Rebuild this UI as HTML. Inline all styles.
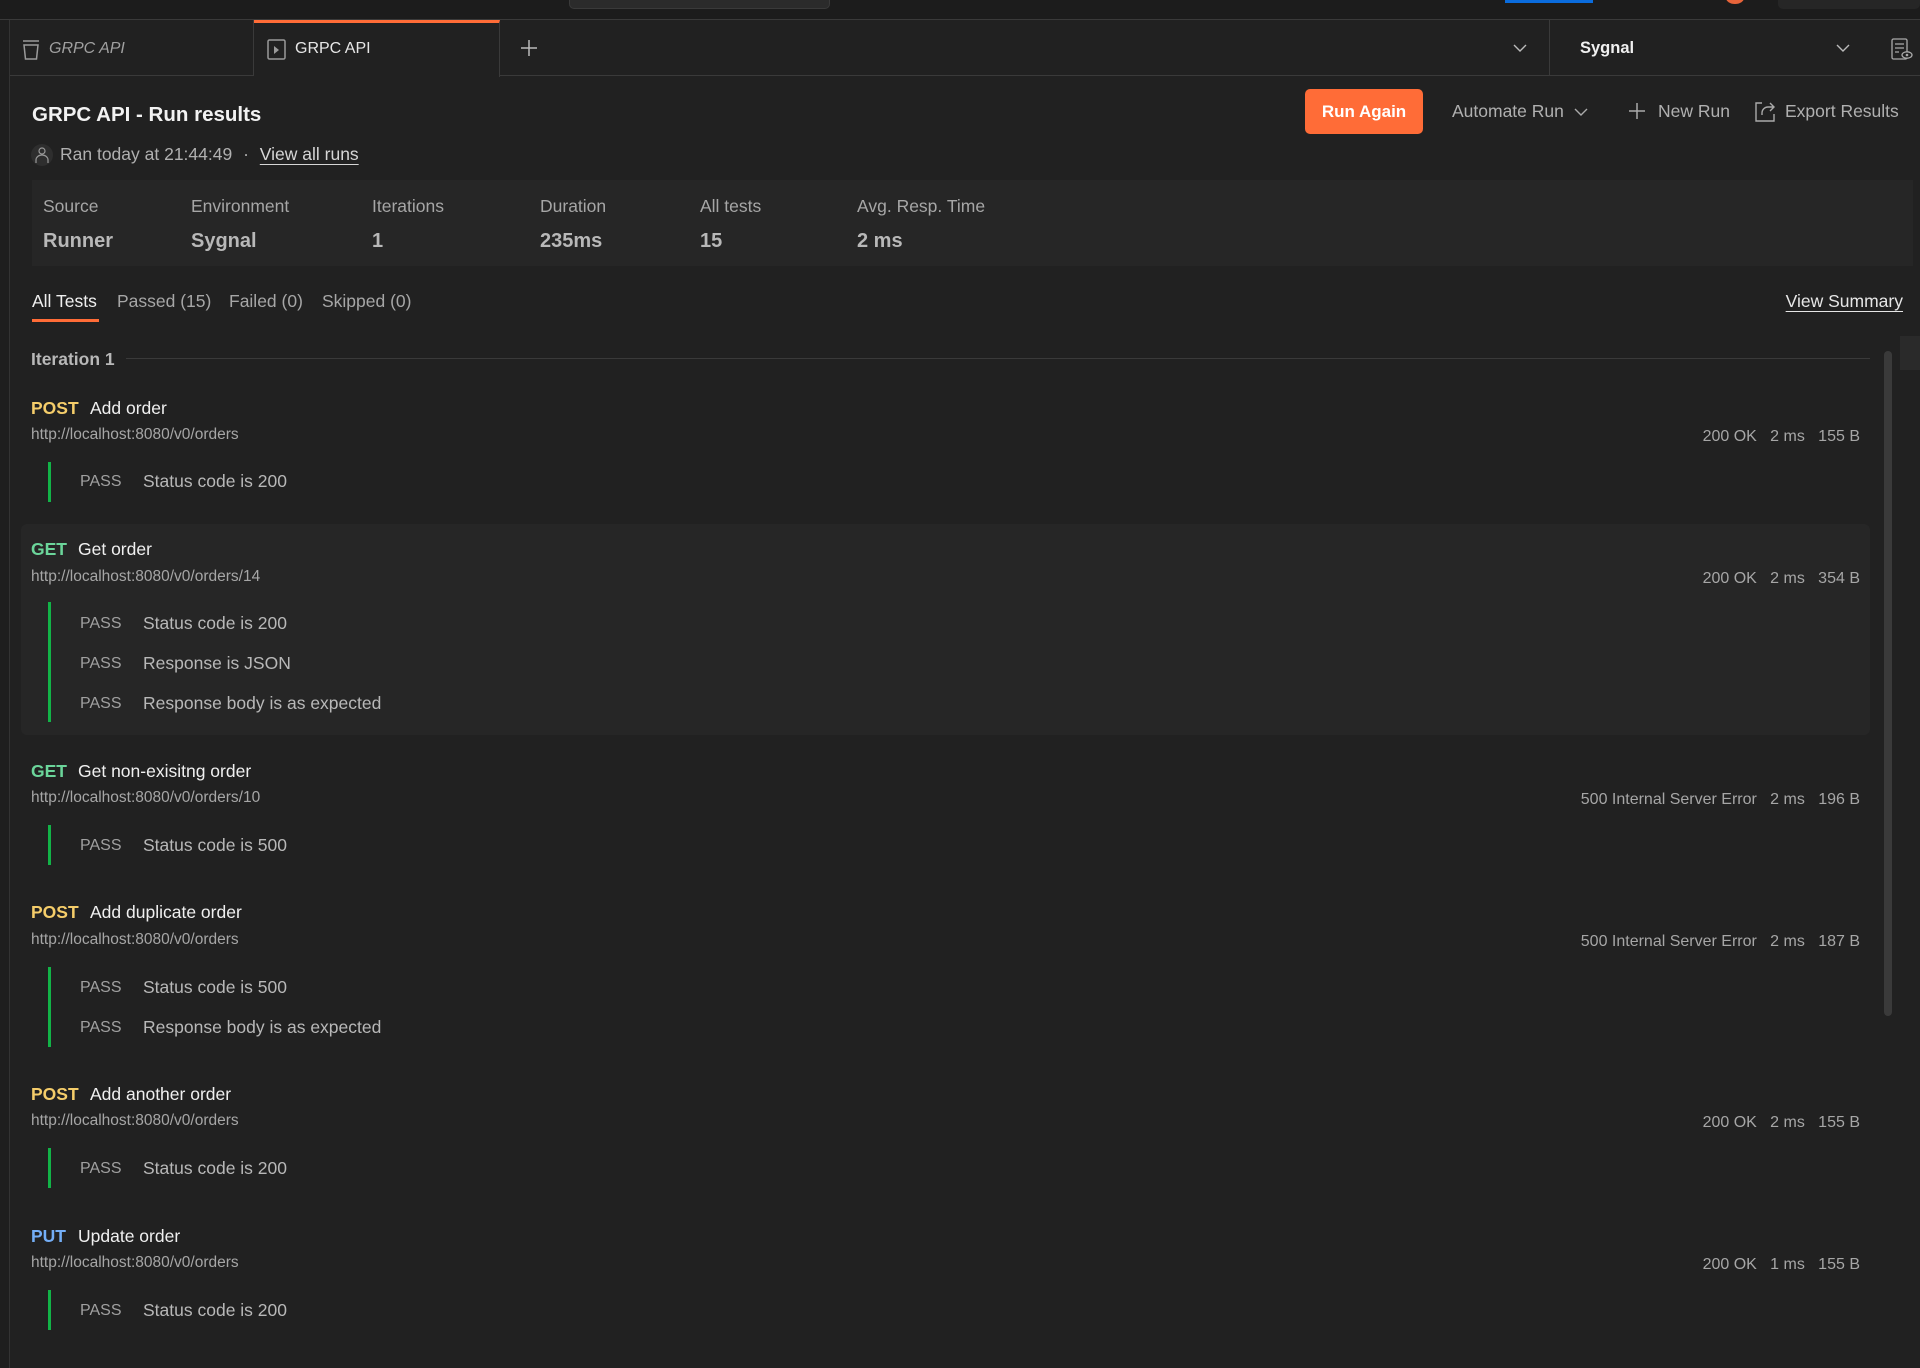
<!DOCTYPE html>
<html><head><meta charset="utf-8"><style>
*{margin:0;padding:0;box-sizing:border-box}
body{width:1920px;height:1368px;background:#212121;font-family:"Liberation Sans",sans-serif;color:#e6e6e6;position:relative;overflow:hidden}
.a{position:absolute;white-space:nowrap}
.sec{color:#a6a6a6}
.m{font-weight:bold;font-size:17.5px}
.nm{font-size:17.5px;color:#f0f0f0}
.url{font-size:15.5px;color:#a6a6a6}
.pass{font-size:16px;color:#a0a0a0}
.tn{font-size:17.5px;color:#b8b8b8}
.bar{position:absolute;left:48px;width:3px;background:#12b347}
.st{font-size:16px;color:#a6a6a6;text-align:right;right:60px}
</style></head><body>
<div class="a" style="left:0;top:0;width:1920px;height:20px;background:#1c1c1c;border-bottom:1px solid #3a3a3a"></div>
<div class="a" style="left:569px;top:0;width:261px;height:9px;background:#2b2b2b;border:1px solid #3a3a3a;border-top:none;border-radius:0 0 5px 5px"></div>
<div class="a" style="left:1505px;top:0;width:88px;height:3px;background:#0a6cde"></div>
<div class="a" style="left:1726px;top:-8px;width:18px;height:12px;background:#e8643a;border-radius:50%"></div>
<div class="a" style="left:1778px;top:0;width:142px;height:9px;background:#262626;border-radius:0 0 5px 5px"></div>
<div class="a" style="left:0;top:20px;width:1920px;height:56px;background:#212121;border-bottom:1px solid #3a3a3a"></div>
<div class="a" style="left:0;top:20px;width:10px;height:1348px;border-right:1px solid #333;background:#1e1e1e"></div>
<div class="a" style="left:10px;top:20px;width:244px;height:56px;border-right:1px solid #3a3a3a"></div>
<div class="a" style="left:254px;top:20px;width:246px;height:57px;border-right:1px solid #3a3a3a;border-top:3px solid #ff6c37;background:#212121"></div>
<svg class="a" style="left:21px;top:39px" width="20" height="22" viewBox="0 0 20 22"><path d="M2 2h16M3 6h14l-1.5 14h-11z" stroke="#9a9a9a" stroke-width="1.5" fill="none"/></svg>
<div class="a" style="left:49px;top:40px;font-size:16px;font-style:italic;color:#a0a0a0">GRPC API</div>
<svg class="a" style="left:267px;top:39px" width="20" height="22" viewBox="0 0 20 22"><rect x="1" y="1" width="17" height="19" rx="1.5" stroke="#9a9a9a" stroke-width="1.5" fill="none"/><path d="M7 7l5 4-5 4z" fill="#9a9a9a"/></svg>
<div class="a" style="left:295px;top:40px;font-size:16px;color:#e6e6e6">GRPC API</div>
<svg class="a" style="left:520px;top:39px" width="18" height="18"><path d="M9 1v16M1 9h16" stroke="#bbb" stroke-width="1.5"/></svg>
<svg class="a" style="left:1513px;top:43px" width="14" height="10"><path d="M1 2l6 6 6-6" stroke="#bbb" stroke-width="1.4" fill="none"/></svg>
<div class="a" style="left:1549px;top:20px;width:1px;height:56px;background:#3a3a3a"></div>
<div class="a" style="left:1580px;top:39px;font-size:16.5px;font-weight:bold;color:#f0f0f0">Sygnal</div>
<svg class="a" style="left:1836px;top:43px" width="14" height="10"><path d="M1 2l6 6 6-6" stroke="#bbb" stroke-width="1.4" fill="none"/></svg>
<svg class="a" style="left:1891px;top:38px" width="22" height="24"><rect x="1" y="1" width="15" height="20" rx="1.5" stroke="#aaa" stroke-width="1.3" fill="none"/><path d="M4 6h9M4 10h9M4 14h4" stroke="#aaa" stroke-width="1.3"/><ellipse cx="16" cy="17" rx="5" ry="3.2" stroke="#aaa" stroke-width="1.3" fill="#212121"/><circle cx="16" cy="17" r="1.3" fill="#aaa"/></svg>
<div class="a" style="left:32px;top:103px;font-size:20.5px;font-weight:bold;color:#f2f2f2">GRPC API - Run results</div>
<div class="a" style="left:31px;top:144px;width:22px;height:22px;border-radius:50%;background:#2e2e2e"></div>
<svg class="a" style="left:34px;top:146px" width="16" height="18"><circle cx="8" cy="5" r="3" stroke="#999" stroke-width="1.2" fill="none"/><path d="M2 17v-3a6 5 0 0 1 12 0v3" stroke="#999" stroke-width="1.2" fill="none"/></svg>
<div class="a sec" style="left:60px;top:144px;font-size:17.5px;color:#b0b0b0">Ran today at 21:44:49 <span style="margin:0 6px">·</span> <span style="color:#d6d6d6;text-decoration:underline;text-underline-offset:4px">View all runs</span></div>
<div class="a" style="left:1305px;top:89px;width:118px;height:45px;background:#ff6c37;border-radius:5px;color:#fff;font-weight:bold;font-size:17px;text-align:center;line-height:45px">Run Again</div>
<div class="a" style="left:1452px;top:101px;font-size:17.5px;color:#b0b0b0">Automate Run</div>
<svg class="a" style="left:1574px;top:107px" width="14" height="10"><path d="M1 2l6 6 6-6" stroke="#aaa" stroke-width="1.4" fill="none"/></svg>
<svg class="a" style="left:1628px;top:102px" width="18" height="18"><path d="M9 1v16M1 9h16" stroke="#aaa" stroke-width="1.5"/></svg>
<div class="a" style="left:1658px;top:101px;font-size:17.5px;color:#b0b0b0">New Run</div>
<svg class="a" style="left:1754px;top:100px" width="22" height="22"><path d="M8 3H2v18h18v-7" stroke="#aaa" stroke-width="1.4" fill="none"/><path d="M8 15v-2a6 6 0 0 1 6-6h6M16 3l4 4-4 4" stroke="#aaa" stroke-width="1.4" fill="none"/></svg>
<div class="a" style="left:1785px;top:101px;font-size:17.5px;color:#b0b0b0">Export Results</div>
<div class="a" style="left:32px;top:180px;width:1881px;height:86px;background:#262626"></div>
<div class="a sec" style="left:43px;top:196px;font-size:17.5px">Source</div>
<div class="a sec" style="left:191px;top:196px;font-size:17.5px">Environment</div>
<div class="a sec" style="left:372px;top:196px;font-size:17.5px">Iterations</div>
<div class="a sec" style="left:540px;top:196px;font-size:17.5px">Duration</div>
<div class="a sec" style="left:700px;top:196px;font-size:17.5px">All tests</div>
<div class="a sec" style="left:857px;top:196px;font-size:17.5px">Avg. Resp. Time</div>
<div class="a" style="left:43px;top:230px;font-size:20px;font-weight:bold;color:#b8b8b8">Runner</div>
<div class="a" style="left:191px;top:230px;font-size:20px;font-weight:bold;color:#b8b8b8">Sygnal</div>
<div class="a" style="left:372px;top:230px;font-size:20px;font-weight:bold;color:#b8b8b8">1</div>
<div class="a" style="left:540px;top:230px;font-size:20px;font-weight:bold;color:#b8b8b8">235ms</div>
<div class="a" style="left:700px;top:230px;font-size:20px;font-weight:bold;color:#b8b8b8">15</div>
<div class="a" style="left:857px;top:230px;font-size:20px;font-weight:bold;color:#b8b8b8">2 ms</div>
<div class="a" style="left:32px;top:291px;font-size:17.5px;color:#f0f0f0">All Tests</div>
<div class="a" style="left:32px;top:319px;width:67px;height:3px;background:#ff6c37"></div>
<div class="a sec" style="left:117px;top:291px;font-size:17.5px">Passed (15)</div>
<div class="a sec" style="left:229px;top:291px;font-size:17.5px">Failed (0)</div>
<div class="a sec" style="left:322px;top:291px;font-size:17.5px">Skipped (0)</div>
<div class="a" style="right:17px;top:291px;font-size:17.5px;color:#e6e6e6;text-decoration:underline;text-underline-offset:4px">View Summary</div>
<div class="a" style="left:31px;top:349px;font-size:17.5px;font-weight:bold;color:#b8b8b8">Iteration 1</div>
<div class="a" style="left:126px;top:358px;width:1744px;height:1px;background:#3a3a3a"></div>
<div class="a" style="left:1884px;top:351px;width:8px;height:665px;border-radius:4px;background:#3a3a3a"></div>
<div class="a" style="left:1900px;top:336px;width:20px;height:34px;background:#2a2a2a"></div>
<div class="a" style="left:21px;top:524px;width:1849px;height:211px;background:#262626;border-radius:6px"></div>
<div class="a m" style="left:31px;top:398px;color:#f5cd6a">POST</div><div class="a nm" style="left:90px;top:398px">Add order</div>
<div class="a url" style="left:31px;top:426px">http://localhost:8080/v0/orders</div>
<div class="a st" style="top:428px">200 OK&nbsp;&nbsp; 2 ms&nbsp;&nbsp; 155 B</div>
<div class="bar" style="top:462px;height:40px"></div>
<div class="a pass" style="left:80px;top:473px">PASS</div><div class="a tn" style="left:143px;top:471px">Status code is 200</div>
<div class="a m" style="left:31px;top:539px;color:#6bd59a">GET</div><div class="a nm" style="left:78px;top:539px">Get order</div>
<div class="a url" style="left:31px;top:568px">http://localhost:8080/v0/orders/14</div>
<div class="a st" style="top:570px">200 OK&nbsp;&nbsp; 2 ms&nbsp;&nbsp; 354 B</div>
<div class="bar" style="top:602px;height:120px"></div>
<div class="a pass" style="left:80px;top:615px">PASS</div><div class="a tn" style="left:143px;top:613px">Status code is 200</div>
<div class="a pass" style="left:80px;top:655px">PASS</div><div class="a tn" style="left:143px;top:653px">Response is JSON</div>
<div class="a pass" style="left:80px;top:695px">PASS</div><div class="a tn" style="left:143px;top:693px">Response body is as expected</div>
<div class="a m" style="left:31px;top:761px;color:#6bd59a">GET</div><div class="a nm" style="left:78px;top:761px">Get non-exisitng order</div>
<div class="a url" style="left:31px;top:789px">http://localhost:8080/v0/orders/10</div>
<div class="a st" style="top:791px">500 Internal Server Error&nbsp;&nbsp; 2 ms&nbsp;&nbsp; 196 B</div>
<div class="bar" style="top:825px;height:40px"></div>
<div class="a pass" style="left:80px;top:837px">PASS</div><div class="a tn" style="left:143px;top:835px">Status code is 500</div>
<div class="a m" style="left:31px;top:902px;color:#f5cd6a">POST</div><div class="a nm" style="left:90px;top:902px">Add duplicate order</div>
<div class="a url" style="left:31px;top:931px">http://localhost:8080/v0/orders</div>
<div class="a st" style="top:933px">500 Internal Server Error&nbsp;&nbsp; 2 ms&nbsp;&nbsp; 187 B</div>
<div class="bar" style="top:967px;height:80px"></div>
<div class="a pass" style="left:80px;top:979px">PASS</div><div class="a tn" style="left:143px;top:977px">Status code is 500</div>
<div class="a pass" style="left:80px;top:1019px">PASS</div><div class="a tn" style="left:143px;top:1017px">Response body is as expected</div>
<div class="a m" style="left:31px;top:1084px;color:#f5cd6a">POST</div><div class="a nm" style="left:90px;top:1084px">Add another order</div>
<div class="a url" style="left:31px;top:1112px">http://localhost:8080/v0/orders</div>
<div class="a st" style="top:1114px">200 OK&nbsp;&nbsp; 2 ms&nbsp;&nbsp; 155 B</div>
<div class="bar" style="top:1148px;height:40px"></div>
<div class="a pass" style="left:80px;top:1160px">PASS</div><div class="a tn" style="left:143px;top:1158px">Status code is 200</div>
<div class="a m" style="left:31px;top:1226px;color:#74aef6">PUT</div><div class="a nm" style="left:78px;top:1226px">Update order</div>
<div class="a url" style="left:31px;top:1254px">http://localhost:8080/v0/orders</div>
<div class="a st" style="top:1256px">200 OK&nbsp;&nbsp; 1 ms&nbsp;&nbsp; 155 B</div>
<div class="bar" style="top:1290px;height:40px"></div>
<div class="a pass" style="left:80px;top:1302px">PASS</div><div class="a tn" style="left:143px;top:1300px">Status code is 200</div>
</body></html>
